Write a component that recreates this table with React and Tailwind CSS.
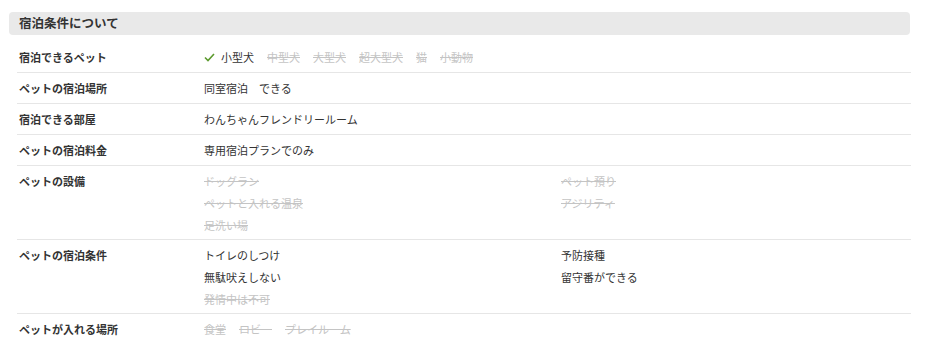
const font = { fontFamily: '"Noto Sans CJK JP", "Noto Sans", sans-serif' }

const Off = ({ children }) => (
  <span className="text-[#c4c4c4] line-through decoration-[#c4c4c4]">{children}</span>
)

const Row = ({ label, children, last, multi }) => (
  <div className={"flex pt-1 " + (multi ? "pb-[3px] " : "pb-1 ") + (last ? "" : "border-b border-[#e6e6e6]")}>
    <div className="w-[187px] shrink-0 pl-[2px] font-bold leading-[22px] text-[#333]">{label}</div>
    <div className="flex-1 leading-[22px] text-[#333]">{children}</div>
  </div>
)

const TwoCol = ({ left, right }) => (
  <div className="flex">
    <div className="w-[357px] flex flex-col">
      {left.map((item, i) => (
        <div key={i}>{item.off ? <Off>{item.text}</Off> : item.text}</div>
      ))}
    </div>
    <div className="flex flex-col">
      {right.map((item, i) => (
        <div key={i}>{item.off ? <Off>{item.text}</Off> : item.text}</div>
      ))}
    </div>
  </div>
)

export default function App() {
  return (
    <div className="bg-white w-[930px] h-[358px] pt-3 pl-[9px] text-[11px]" style={font}>
      <div className="w-[901px] h-[23px] bg-[#e9e9e9] rounded-[4px] pl-[10px] flex items-center">
        <h2 className="font-bold text-[12.5px] text-[#333]">宿泊条件について</h2>
      </div>

      <div className="ml-[8px] w-[894px] mt-[7px]">
        <Row label="宿泊できるペット">
          <div className="flex items-center gap-[13px]">
            <span className="flex items-center gap-[6px]">
              <svg width="11" height="9" viewBox="0 0 11 9" className="shrink-0">
                <polyline points="1,4.5 4,7.5 10,1" fill="none" stroke="#5c9a2e" strokeWidth="1.6" />
              </svg>
              小型犬
            </span>
            <Off>中型犬</Off>
            <Off>大型犬</Off>
            <Off>超大型犬</Off>
            <Off>猫</Off>
            <Off>小動物</Off>
          </div>
        </Row>
        <Row label="ペットの宿泊場所">同室宿泊　できる</Row>
        <Row label="宿泊できる部屋">わんちゃんフレンドリールーム</Row>
        <Row label="ペットの宿泊料金">専用宿泊プランでのみ</Row>
        <Row label="ペットの設備" multi>
          <TwoCol
            left={[
              { text: "ドッグラン", off: true },
              { text: "ペットと入れる温泉", off: true },
              { text: "足洗い場", off: true },
            ]}
            right={[
              { text: "ペット預り", off: true },
              { text: "アジリティ", off: true },
            ]}
          />
        </Row>
        <Row label="ペットの宿泊条件" multi>
          <TwoCol
            left={[
              { text: "トイレのしつけ" },
              { text: "無駄吠えしない" },
              { text: "発情中は不可", off: true },
            ]}
            right={[{ text: "予防接種" }, { text: "留守番ができる" }]}
          />
        </Row>
        <Row label="ペットが入れる場所" last>
          <div className="flex gap-[13px]">
            <Off>食堂</Off>
            <Off>ロビー</Off>
            <Off>プレイルーム</Off>
          </div>
        </Row>
      </div>
    </div>
  )
}
